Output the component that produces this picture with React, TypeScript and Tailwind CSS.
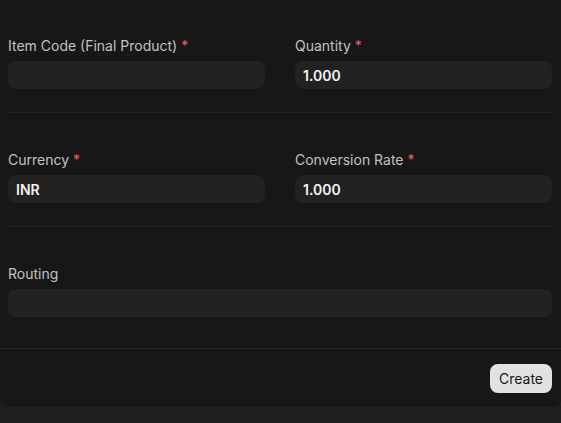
const font = { fontFamily: "Inter, 'Noto Sans', sans-serif" };

function Field({
  label,
  value,
  required,
}: {
  label: string;
  value?: string;
  required?: boolean;
}) {
  return (
    <div className="flex flex-col">
      <label className="mb-[5px] h-5 text-[14px] leading-5 text-[#c2c2c2]">
        {label}
        {required && <span className="ml-1 text-[#e5646a]">*</span>}
      </label>
      <div className="flex h-7 items-center rounded-lg bg-[#222222] px-2 text-[14px] font-semibold text-[#f2f2f2]">
        {value}
      </div>
    </div>
  );
}

export default function App() {
  return (
    <div className="h-[423px] w-full bg-[#1e1e1e]" style={font}>
      <div className="rounded-b-lg bg-[#171717]">
        <div className="pl-2 pr-[9px]">
          <div className="grid grid-cols-2 gap-[30px] border-b border-[#242424] pt-[36px] pb-[23px]">
            <Field label="Item Code (Final Product)" required />
            <Field label="Quantity" value="1.000" required />
          </div>
          <div className="grid grid-cols-2 gap-[30px] border-b border-[#242424] pt-[37px] pb-[23px]">
            <Field label="Currency" value="INR" required />
            <Field label="Conversion Rate" value="1.000" required />
          </div>
          <div className="pt-[37px] pb-[31px]">
            <Field label="Routing" />
          </div>
        </div>
        <div className="flex justify-end border-t border-[#242424] pr-[9px] pt-[15px] pb-[14px]">
          <button
            type="button"
            className="h-[29px] rounded-lg bg-[#e2e2e2] px-[9px] text-[14px] text-[#171717]"
          >
            Create
          </button>
        </div>
      </div>
    </div>
  );
}
